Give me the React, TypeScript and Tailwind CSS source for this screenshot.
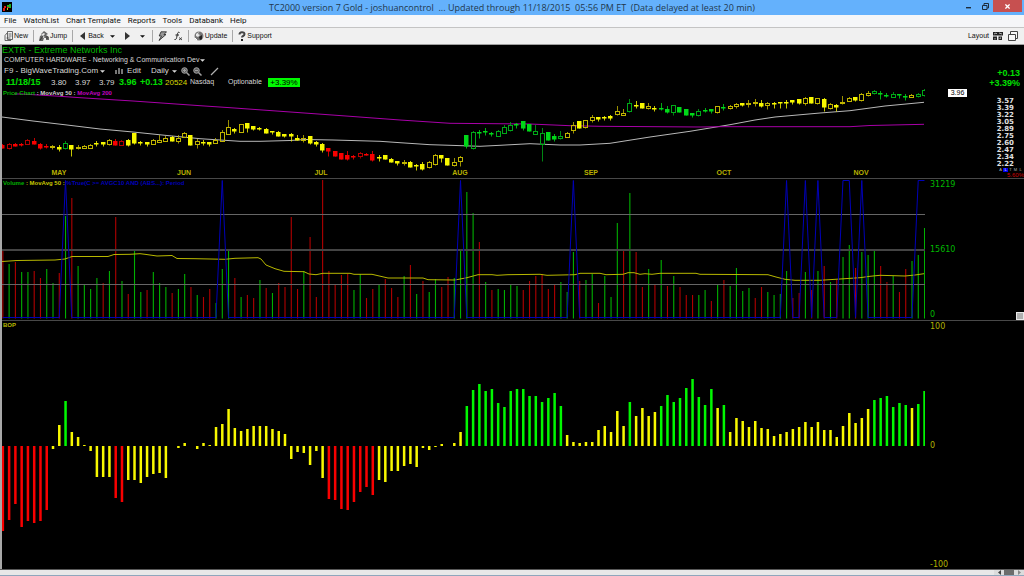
import React from 'react';

type Tone = 'r' | 'g' | 'y';
// tone, filled body, high, body top, body bottom, low
type Candle = [Tone, number, number, number, number, number];

const TONES: Record<Tone, string> = { r: '#f80000', g: '#00d818', y: '#f8f800' };
const HOLLOW: Record<Tone, string> = { r: '#b80000', g: '#00a818', y: '#c0b400' };

const WIDTH = 923;
const STEP = 6.27;
const barX = (i: number) => 0.8 + STEP * i;

const CANDLES: Candle[] = [
  ['r', 1, 56, 57, 60, 60], ['r', 0, 55, 56, 60, 61], ['r', 1, 55, 56, 58, 58], ['r', 1, 55, 56, 57, 58],
  ['r', 0, 51, 52, 56, 56], ['r', 1, 50, 53, 56, 56], ['r', 1, 55, 56, 60, 61], ['r', 1, 56, 58, 59, 60],
  ['y', 0, 57, 58, 59, 61], ['y', 1, 57, 59, 61, 63], ['g', 0, 53, 55, 60, 61], ['y', 1, 57, 57, 61, 68],
  ['y', 0, 57, 59, 60, 61], ['y', 0, 57, 58, 60, 60], ['y', 0, 56, 57, 60, 60], ['y', 1, 53, 55, 56, 58],
  ['y', 1, 54, 54, 56, 58], ['y', 0, 51, 52, 56, 57], ['r', 1, 51, 53, 57, 57], ['r', 0, 52, 53, 57, 57],
  ['y', 1, 51, 52, 57, 58], ['y', 1, 45, 45, 55, 56], ['y', 1, 53, 54, 55, 57], ['y', 1, 54, 54, 56, 58],
  ['y', 0, 51, 52, 56, 56], ['y', 0, 47, 52, 54, 54], ['y', 0, 48, 50, 53, 53], ['y', 1, 48, 49, 53, 53],
  ['y', 0, 47, 50, 53, 55], ['y', 0, 44, 45, 49, 49], ['y', 1, 47, 47, 57, 57], ['y', 0, 51, 53, 56, 60],
  ['y', 1, 52, 54, 55, 57], ['y', 1, 54, 54, 56, 58], ['y', 0, 50, 52, 55, 55], ['y', 0, 42, 44, 53, 53],
  ['y', 0, 32, 39, 46, 46], ['y', 1, 40, 41, 43, 45], ['y', 0, 36, 36, 44, 44], ['y', 1, 35, 35, 40, 44],
  ['y', 1, 38, 38, 41, 42], ['y', 1, 39, 40, 41, 42], ['y', 1, 40, 41, 45, 45], ['y', 1, 43, 43, 44, 46],
  ['y', 1, 43, 44, 48, 48], ['y', 1, 46, 46, 48, 49], ['y', 1, 45, 46, 48, 53], ['y', 1, 47, 50, 52, 52],
  ['y', 0, 47, 50, 52, 54], ['y', 1, 48, 48, 55, 56], ['y', 1, 53, 54, 56, 58], ['y', 1, 55, 56, 62, 64],
  ['r', 1, 60, 60, 63, 68], ['r', 1, 63, 63, 68, 68], ['r', 1, 65, 65, 71, 71], ['r', 1, 63, 67, 71, 72],
  ['r', 1, 67, 68, 69, 71], ['r', 0, 64, 65, 68, 70], ['r', 1, 65, 66, 67, 67], ['r', 1, 63, 66, 72, 73],
  ['y', 1, 67, 69, 70, 73], ['y', 1, 67, 67, 71, 71], ['y', 1, 70, 71, 74, 74], ['y', 1, 73, 73, 75, 77],
  ['y', 0, 72, 74, 75, 77], ['y', 1, 73, 74, 79, 79], ['y', 1, 76, 77, 78, 82], ['y', 1, 74, 76, 81, 82],
  ['y', 0, 73, 74, 79, 80], ['y', 0, 66, 67, 76, 77], ['y', 1, 67, 67, 70, 74], ['y', 1, 70, 70, 77, 77],
  ['y', 0, 70, 74, 77, 78], ['y', 0, 68, 69, 73, 78], ['g', 1, 47, 47, 58, 60], ['g', 0, 43, 44, 60, 61],
  ['g', 1, 42, 44, 45, 50], ['g', 1, 40, 43, 44, 47], ['g', 1, 44, 45, 46, 48], ['g', 0, 42, 43, 48, 48],
  ['g', 0, 37, 39, 45, 45], ['g', 0, 34, 37, 42, 43], ['g', 1, 35, 36, 37, 40], ['g', 1, 33, 33, 40, 42],
  ['g', 1, 36, 36, 43, 43], ['g', 0, 37, 43, 46, 46], ['g', 0, 40, 45, 56, 73], ['g', 1, 44, 44, 52, 52],
  ['g', 1, 46, 48, 51, 53], ['g', 0, 43, 48, 50, 51], ['y', 0, 44, 45, 49, 49], ['y', 0, 34, 37, 42, 45],
  ['y', 1, 33, 33, 40, 40], ['y', 0, 32, 32, 39, 40], ['y', 0, 27, 29, 32, 34], ['y', 1, 29, 29, 31, 33],
  ['y', 1, 28, 29, 30, 32], ['y', 1, 27, 28, 30, 32], ['y', 0, 18, 23, 26, 27], ['y', 0, 21, 25, 27, 27],
  ['g', 0, 11, 15, 23, 24], ['y', 1, 13, 17, 18, 20], ['y', 1, 15, 15, 20, 20], ['y', 0, 15, 18, 20, 21],
  ['y', 1, 18, 20, 21, 23], ['g', 1, 15, 20, 21, 22], ['g', 1, 18, 21, 24, 25], ['g', 0, 17, 17, 24, 27],
  ['g', 1, 19, 19, 24, 24], ['g', 1, 21, 21, 27, 27], ['g', 1, 25, 25, 27, 29], ['g', 0, 21, 23, 27, 28],
  ['g', 1, 20, 22, 23, 24], ['g', 1, 21, 21, 23, 25], ['y', 0, 18, 18, 24, 25], ['g', 1, 16, 19, 20, 22],
  ['y', 0, 17, 18, 20, 21], ['y', 0, 15, 16, 18, 20], ['y', 1, 15, 15, 17, 18], ['y', 0, 12, 15, 16, 19],
  ['y', 0, 11, 14, 15, 18], ['y', 1, 12, 15, 18, 19], ['y', 0, 14, 15, 17, 21], ['y', 1, 14, 15, 16, 20],
  ['y', 1, 14, 14, 15, 20], ['y', 1, 12, 14, 15, 20], ['y', 1, 12, 12, 14, 16], ['y', 1, 11, 11, 15, 16],
  ['y', 0, 9, 10, 15, 17], ['y', 1, 9, 9, 15, 15], ['y', 0, 10, 10, 15, 16], ['y', 1, 10, 11, 19, 23],
  ['y', 0, 15, 16, 20, 21], ['y', 1, 16, 17, 19, 23], ['y', 0, 8, 14, 15, 16], ['y', 0, 9, 10, 13, 13],
  ['y', 1, 9, 9, 12, 13], ['y', 0, 5, 6, 12, 13], ['y', 0, 3, 5, 7, 8], ['g', 0, 2, 3, 5, 6],
  ['g', 1, 3, 5, 6, 11], ['g', 1, 5, 7, 8, 9], ['g', 0, 4, 6, 9, 9], ['g', 1, 6, 6, 7, 10],
  ['g', 1, 6, 8, 9, 12], ['y', 0, 6, 7, 9, 9], ['g', 0, 5, 6, 8, 9], ['g', 0, 1, 2, 7, 8],
];

const AVG_50 = '0,29 31,33 65,37 98,41 131,44 165,47.5 198,50.7 238,53.3 258,53.3 288,52.5 303,51.5 331,52 378,53.3 398,54.7 428,56.7 448,57.3 478,58.3 498,57.3 528,55.7 558,57 578,57 608,55.3 648,49 688,43.3 728,36.7 753,32 773,29 818,25 848,22.7 883,18 922,14.3';
const AVG_200 = '12,6 20,6 58,8.3 78,9.7 131,13 198,17.7 228,19.7 298,24.7 348,28.3 398,32 448,35.3 528,36 568,37.7 598,38.3 698,39 718,38.7 848,38.7 868,37.5 922,36.3';

// Colour and top edge of each volume bar
const VOLUME = (
  'r71 g85 r83 g93 g93 r92 r99 g90 g104 r94 g37 r19 g87 g106 g110 g99 r104 g92 r38 g102 ' +
  'r115 g71 g113 r111 g93 g104 g108 r114 g110 g95 r108 g116 r118 r110 g124 g90 g72 r99 g118 r116 ' +
  'r119 g101 r109 g114 r104 r108 r38 r110 g92 r58 r118 r1 r92 r106 r96 r95 g111 g95 r119 r110 ' +
  'g106 r100 r109 r118 g97 r86 g115 r102 g113 g100 r108 r98 g99 g71 g13 g34 r63 g103 r111 g110 ' +
  'g111 g106 g107 r111 r102 r97 r95 r110 r106 g103 g113 g73 r102 g101 g95 r124 g97 g118 g44 r72 ' +
  'g14 r73 r108 g90 r106 g81 r107 g97 r108 r116 r116 g116 g111 r122 g105 r101 g107 g89 g112 g109 ' +
  'r119 r108 g113 g116 g115 g92 r119 r114 g93 r111 g92 r87 g103 r101 g78 g66 r89 g73 g76 g72 ' +
  'r87 r103 g97 r113 r90 g82 g76 g49'
).split(' ');

const VOLUME_AVG = '0,82.5 15,81.5 53,81 63,80 70,77.5 106,77.5 112,75.5 128,75.3 138,74.7 143,75.3 155,77 170,76.5 175,79.5 193,79.7 223,80.3 233,79.3 256,78.7 259,80 264,86 273,89.7 282,92.3 302,92.7 307,95 314,95.7 321,94.3 348,94.3 352,95.3 370,95.3 386,99 421,99 426,100.7 453,101 465,98.7 476,95.7 490,95.7 495,96.3 506,95.7 538,95.3 545,96.3 573,95.7 578,94.3 598,94.3 604,95.7 621,95.3 626,93.7 632,93.7 638,95.3 643,94.7 650,95.3 658,94.3 694,94.3 698,95.3 766,95.7 774,98 783,100.3 793,101.3 818,101.3 838,100 858,98.7 868,97.3 878,96.3 903,97 913,96 922,94.7';

// Sessions where the scan condition is true
const SIGNALS = [10, 35, 73, 91, 125, 128, 130, 134, 135, 137, 146, 147];

const BOP = (
  'r-85 r-74 r-58 r-81 r-75 r-77 r-75 r-64 y-3 y21 g45 y14 y9 y1 y-5 y-31 y-31 y-31 r-52 r-56 ' +
  'y-34 y-34 y-37 y-31 y-28 y-27 y-32 y0 y-2 y3 y0 y-3 y3 y1 y19 y22 y37 y18 y15 y17 ' +
  'y20 y20 y20 y17 y15 y12 y-13 y-6 y-7 y-19 y-5 y-32 r-53 r-54 r-63 r-64 r-56 r-46 r-41 r-49 ' +
  'y-34 y-36 y-25 y-25 y-20 y-18 y-21 y-2 y-4 y-1 y2 y0 y3 y14 g40 g56 g62 g55 g57 g43 ' +
  'g39 g55 g57 g57 g50 g50 g44 g48 g53 g40 y11 y4 y3 y4 y4 y16 y20 y14 y35 y20 ' +
  'g44 y30 y38 y30 y34 g40 g51 g44 g48 g58 g67 g49 g41 g57 y38 g41 y14 y28 y25 y19 ' +
  'y25 y18 y17 y10 y12 y14 y17 y19 y24 y19 y24 y16 y16 y9 y20 y33 y23 y28 y37 g46 ' +
  'g48 g50 g39 g43 g41 y38 g42 g55'
).split(' ');

const MONTHS = [
  { name: 'MAY', x: 57 }, { name: 'JUN', x: 182 }, { name: 'JUL', x: 319 }, { name: 'AUG', x: 458 },
  { name: 'SEP', x: 589 }, { name: 'OCT', x: 722 }, { name: 'NOV', x: 859 },
];

const PRICES = ['3.57', '3.39', '3.22', '3.05', '2.89', '2.75', '2.60', '2.47', '2.34', '2.22'];
const MENUS = ['File', 'WatchList', 'Chart Template', 'Reports', 'Tools', 'Databank', 'Help'];

function Caret() {
  return (
    <svg viewBox="0 0 6 3" className="w-[5px] h-[3px] shrink-0" fill="currentColor">
      <path d="M0 0h6L3 3z" />
    </svg>
  );
}

function Separator() {
  return <span className="w-px h-3 bg-[#a8a8a8]" />;
}

function TitleBar() {
  return (
    <header className="relative h-[15px] bg-[#64b1fc] flex items-center justify-center text-[#22384c]">
      <svg viewBox="0 0 10 10" className="absolute left-0.5 top-0.5 w-[10px] h-[10px]">
        <rect width="10" height="10" fill="#000" />
        <path d="M1 9V6h1V4h2v2H3v3zM5 4h2v2H5z" fill="#e01818" />
        <path d="M5 3h2V2h2v4H7V5H5z" fill="#20b020" />
        <path d="M4 8h1V6h1v2z" fill="#c8c820" />
      </svg>
      <h1 className="font-['Open_Sans',sans-serif] text-[9px] leading-[15px] whitespace-pre">
        TC2000 version 7 Gold - joshuancontrol  ... Updated through 11/18/2015  05:56 PM ET  (Data delayed at least 20 min)
      </h1>
      <div className="absolute right-0.5 top-0 h-3 flex items-center text-[#1c2c3c]">
        <button type="button" aria-label="Minimize" className="w-4 h-3 flex items-center justify-center">
          <svg viewBox="0 0 6 6" className="w-1.5 h-1.5"><path d="M0 4h5v1.4H0z" fill="currentColor" /></svg>
        </button>
        <button type="button" aria-label="Restore" className="w-4 h-3 flex items-center justify-center">
          <svg viewBox="0 0 7 7" className="w-[7px] h-[7px]" fill="none" stroke="currentColor">
            <path d="M2 2V.5h4.5V5H5" />
            <path d="M.5 2.5H5v4H.5z" />
          </svg>
        </button>
        <button type="button" aria-label="Close" className="w-[29px] h-3 bg-[#c75050] text-white flex items-center justify-center">
          <svg viewBox="0 0 6 6" className="w-[5px] h-[5px]"><path d="M.5.5l5 5m0-5l-5 5" stroke="currentColor" strokeWidth="1.5" /></svg>
        </button>
      </div>
    </header>
  );
}

function Toolbar() {
  return (
    <div className="h-[18px] bg-[#f0f0f0] border-t border-t-[#c4c4c4] border-b border-b-[#a0a0a0] pl-1 pr-1.5 flex items-center gap-[5px] text-[7px] leading-[10px] text-[#101010]">
      <button type="button" className="flex items-center gap-px">
        <svg viewBox="0 0 9 10" className="w-[9px] h-[10px]" fill="none" stroke="#444" strokeWidth="0.8">
          <path d="M3.5.5h5v8h-5zM1 4.5v5h6M1 4.5L3 2M4.5 3h3M4.5 5h3M2.5 7h4" />
        </svg>
        New
      </button>
      <Separator />
      <button type="button" className="flex items-center">
        <svg viewBox="0 0 11 10" className="w-[11px] h-[10px]">
          <path d="M2 3l3-3 4 3-2 1 3 2v3H7V7H5l-1 3H0l1-5 2-1z" fill="#666" />
          <path d="M3 3l2-1 1 1-2 2 2 1-2 1z" fill="#eee" />
          <path d="M1 9l3-4M8 8V5" stroke="#222" strokeWidth="0.7" />
        </svg>
        Jump
      </button>
      <Separator />
      <button type="button" className="flex items-center gap-[3px] pl-0.5">
        <svg viewBox="0 0 5 8" className="w-[5px] h-2"><path d="M5 0v8L0 4z" fill="#333" /></svg>
        Back
      </button>
      <button type="button" aria-label="Back history" className="w-2 h-3 flex items-center justify-center"><Caret /></button>
      <button type="button" aria-label="Forward" className="w-3 h-3 flex items-center justify-center">
        <svg viewBox="0 0 5 8" className="w-[5px] h-2"><path d="M0 0v8l5-4z" fill="#333" /></svg>
      </button>
      <button type="button" aria-label="Forward history" className="w-2 h-3 flex items-center justify-center"><Caret /></button>
      <Separator />
      <button type="button" aria-label="Easy scan">
        <svg viewBox="0 0 9 10" className="w-[9px] h-[10px]" fill="#999" stroke="#222" strokeWidth="0.8">
          <path d="M3 .8h5.5L6 3.5h2L1 9.5l2.500-4.500H1.200z" />
        </svg>
      </button>
      <button type="button" aria-label="Formula" className="pl-0.5">
        <svg viewBox="0 0 9 10" className="w-[9px] h-[10px]" fill="none" stroke="#222">
          <path d="M5.500 1.500C3.500.5 3.500 3 3 5S2.500 9 .5 8.500M1.500 4h3.500" />
          <path d="M5 6.500l3 2.500M8 6.500L5 9" strokeWidth="0.8" />
        </svg>
      </button>
      <Separator />
      <button type="button" className="flex items-center gap-px">
        <svg viewBox="0 0 10 10" className="w-[10px] h-[10px]">
          <circle cx="5" cy="5" r="4.500" fill="#777" />
          <path d="M2 3l3-2-1 2 2 1-2 2-2-1z" fill="#e8e8e8" />
          <path d="M5 6l3-2v4l-2 1z" fill="#222" />
          <path d="M1 7l2 2" stroke="#fff" />
        </svg>
        Update
      </button>
      <Separator />
      <button type="button" className="flex items-center gap-px">
        <svg viewBox="0 0 8 10" className="w-2 h-[10px]" fill="none">
          <path d="M1.500 3.500C1.500.5 6.500.5 6.500 3S4 4.500 4 6.500" stroke="#444" strokeWidth="2" />
          <path d="M3 8h2v2H3z" fill="#222" />
        </svg>
        Support
      </button>
      <button type="button" className="ml-auto flex items-center gap-1">
        Layout
        <svg viewBox="0 0 10 10" className="w-[10px] h-[10px]" fill="#222">
          <path d="M0 1h10v3.500H0zM0 5.500h4v3.500H0zM5.500 5.500H9v3.500H5.500z" />
          <path d="M1 3l2-1 1 1M6 2l3 1M2 8.500V7M7 8V7h1" stroke="#eee" strokeWidth="0.7" fill="none" />
        </svg>
      </button>
      <button type="button" aria-label="Windows">
        <svg viewBox="0 0 10 10" className="w-[10px] h-[10px]" fill="#f8f8f8" stroke="#444">
          <path d="M2.500.5h7v7h-7z" />
          <path d="M.5 3.500h7v6h-7z" />
        </svg>
      </button>
    </div>
  );
}

function Magnifier({ minus }: { minus?: boolean }) {
  return (
    <svg viewBox="0 0 9 9" className="w-[9px] h-[9px]" fill="none" stroke="#a0a0a0">
      <circle cx="3.500" cy="3.500" r="2.800" fill="#606060" />
      <path d="M5.500 5.500L8.500 8.500" strokeWidth="1.500" />
      <path d={minus ? 'M2 3.500h3' : 'M2 3.500h3M3.500 2v3'} />
    </svg>
  );
}

function SymbolHeader() {
  return (
    <section className="flex justify-between items-end h-[43px] pr-1">
      <div className="text-[#d8d8d8] whitespace-nowrap">
        <h2 className="text-[9px] leading-[11px] text-[#00b800]">EXTR - Extreme Networks Inc</h2>
        <button type="button" className="flex items-center gap-px pl-0.5 h-[9px] text-[7px]">
          COMPUTER HARDWARE - Networking &amp; Communication Dev
          <Caret />
        </button>
        <div className="flex items-center pl-0.5 h-3 text-[8px]">
          <button type="button" className="flex items-center gap-0.5">F9 - BigWaveTrading.Com <Caret /></button>
          <button type="button" className="flex items-center gap-[3px] ml-2.5">
            <svg viewBox="0 0 9 8" className="w-[9px] h-2" fill="#777"><path d="M0 3h2v4H0zM3 1h2v6H3zM6 2h2v5H6z" /></svg>
            Edit
          </button>
          <button type="button" className="flex items-center gap-[3px] ml-2.5">Daily <Caret /></button>
          <button type="button" aria-label="Zoom in" className="ml-1"><Magnifier /></button>
          <button type="button" aria-label="Zoom out" className="ml-[3px]"><Magnifier minus /></button>
          <button type="button" aria-label="Draw line" className="ml-2">
            <svg viewBox="0 0 9 9" className="w-[9px] h-[9px]"><path d="M1 8L8 1" stroke="#b0b0b0" strokeWidth="1.300" /></svg>
          </button>
        </div>
        <div className="flex items-center pl-1 h-[11px] text-[8px]">
          <b className="w-[45px] text-[9px] text-[#00e000]">11/18/15</b>
          <span className="w-6">3.80</span>
          <span className="w-6">3.97</span>
          <span className="w-5">3.79</span>
          <b className="w-[21px] text-[9px] text-[#00e000]">3.96</b>
          <b className="w-[25px] text-[9px] text-[#00e000]">+0.13</b>
          <span className="w-[25px] text-[#d8d800]">20524</span>
          <span className="w-[38px] text-[7px]">Nasdaq</span>
          <span className="w-10 text-[7px]">Optionable</span>
          <span className="w-8 h-[9px] leading-[9px] text-center bg-[#00f800] text-black">+3.39%</span>
        </div>
      </div>
      <div className="text-right font-bold text-[9px] leading-[10px] text-[#00e000]">
        <p>+0.13</p>
        <p>+3.39%</p>
      </div>
    </section>
  );
}

function PricePanel() {
  return (
    <section className="flex h-[90px]">
      <div className="relative flex flex-1 min-w-0">
        <svg viewBox={`0 0 ${WIDTH} 90`} preserveAspectRatio="none" className="w-full h-full">
          <polyline points={AVG_50} fill="none" stroke="#b8b8b8" />
          <polyline points={AVG_200} fill="none" stroke="#a800a8" />
          {CANDLES.map(([tone, filled, high, top, bottom, low], i) => {
            const x = Math.floor(barX(i));
            const color = filled ? TONES[tone] : HOLLOW[tone];
            return (
              <g key={i} fill={color}>
                <rect x={x} y={high} width={1} height={top - high} opacity={0.8} />
                <rect x={x} y={bottom} width={1} height={low - bottom + 0.5} opacity={0.8} />
                {filled
                  ? <rect x={x - 2} y={top} width={4.5} height={Math.max(bottom - top, 1) + 0.5} />
                  : <rect x={x - 1.5} y={top + 0.5} width={4} height={Math.max(bottom - top, 1)} fill="none" stroke={color} />}
              </g>
            );
          })}
        </svg>
        <p className="absolute left-px top-0.5 text-[6px] leading-[7px] font-bold text-[#d0d0d0] whitespace-nowrap">
          <span className="text-[#00b000]">Price Chart</span> : MovAvg 50 : <span className="text-[#c000c0]">MovAvg 200</span>
        </p>
        {MONTHS.map(m => (
          <span
            key={m.name}
            className="absolute bottom-px -translate-x-1/2 text-[7px] leading-[8px] font-bold text-[#b8b000]"
            style={{ left: `${(m.x / WIDTH) * 100}%` }}
          >
            {m.name}
          </span>
        ))}
      </div>
      <div className="w-[99px] shrink-0 flex justify-between items-start">
        <span className="ml-[23px] mt-px w-[19px] h-2 leading-[8px] text-[7px] text-center bg-white text-black">3.96</span>
        <div className="flex flex-col items-end pt-[10px]">
          <ul className="pr-2.5 font-['DejaVu_Sans',sans-serif] font-bold text-[7px] leading-[7px] text-[#e0e0e0]">
            {PRICES.map(p => <li key={p}>{p}</li>)}
          </ul>
          <div className="flex pr-px text-[4px] leading-[4px] text-[#b0b0b0]">
            {['A', 'L', 'T', 'M', 'L'].map((scale, i) => (
              <button key={i} type="button" className={i === 1 ? 'w-[5px] h-1 bg-[#0000f0] text-white' : 'w-[5px] h-1'}>{scale}</button>
            ))}
          </div>
          <span className="text-[6px] leading-[6px] text-[#d00000]">5.60%</span>
        </div>
      </div>
    </section>
  );
}

function VolumePanel() {
  const signal = VOLUME.map((_, i) => `${barX(i)},${SIGNALS.includes(i) ? 1.5 : 138.5}`).join(' ');
  return (
    <section className="relative flex h-[142px] border-t border-[#484848]">
      <div className="relative flex flex-1 min-w-0">
        <svg viewBox={`0 0 ${WIDTH} 141`} preserveAspectRatio="none" className="w-full h-full">
          {VOLUME.map((bar, i) => {
            const top = Number(bar.slice(1));
            return <rect key={i} x={barX(i) - 0.5} y={top} width={1.1} height={139.5 - top} fill={bar[0] === 'r' ? '#b00000' : '#00b000'} />;
          })}
          <path d={`M0 35.5H${WIDTH}M0 105.5H${WIDTH}`} stroke="#666" />
          <path d={`M0 71H${WIDTH}`} stroke="#444" strokeWidth="2" />
          <polyline points={VOLUME_AVG} fill="none" stroke="#b8b800" />
          <polyline points={signal} fill="none" stroke="#0000b8" />
        </svg>
        <p className="absolute left-px top-px text-[6px] leading-[7px] font-bold text-[#c8c800] whitespace-nowrap">
          <span className="text-[#00b000]">Volume</span> : MovAvg 50 : <span className="text-[#0000b8]">%True(C &gt;= AVGC10 AND (ABS...): Period</span>
        </p>
      </div>
      <div className="w-[99px] shrink-0 pl-[5px] flex flex-col justify-between text-[8px] leading-[11px] text-[#00b800] font-['DejaVu_Sans',sans-serif]">
        <span>31219</span>
        <span>15610</span>
        <span>0</span>
      </div>
      <button type="button" aria-label="Resize panel" className="absolute right-0 bottom-0 w-2 h-2 bg-[#b0b0b0] border border-[#e8e8e8]" />
    </section>
  );
}

function BopPanel() {
  return (
    <section className="flex flex-1 border-t border-[#484848]">
      <div className="relative flex flex-1 min-w-0">
        <svg viewBox={`0 0 ${WIDTH} 248`} preserveAspectRatio="none" className="w-full">
          {BOP.map((bar, i) => {
            const value = Number(bar.slice(1));
            const color = bar[0] === 'r' ? '#f80000' : bar[0] === 'g' ? '#00f800' : '#f8f800';
            return <rect key={i} x={barX(i) - 1.2} y={value > 0 ? 125 - value : 125} width={2.5} height={Math.abs(value)} fill={color} />;
          })}
        </svg>
        <p className="absolute left-px top-px text-[6px] leading-[7px] font-bold text-[#b8b800]">BOP</p>
      </div>
      <div className="w-[99px] shrink-0 pl-[5px] pt-px flex flex-col justify-between text-[8px] leading-[9px] text-[#b0b000] font-['DejaVu_Sans',sans-serif]">
        <span>100</span>
        <span>0</span>
        <span>-100</span>
      </div>
    </section>
  );
}

export default function App() {
  return (
    <div className="min-h-screen flex flex-col bg-black font-['Liberation_Sans',Arial,sans-serif]">
      <TitleBar />
      <nav className="h-3 bg-[#f5f6f8] pl-1 flex items-center gap-[7px] font-['Roboto',sans-serif] text-[8px] leading-[12px] text-[#101010]">
        {MENUS.map(menu => <button key={menu} type="button">{menu}</button>)}
      </nav>
      <Toolbar />
      <main className="flex-1 flex flex-col border-l-2 border-[#a8a8a8]">
        <SymbolHeader />
        <PricePanel />
        <VolumePanel />
        <BopPanel />
      </main>
      <footer className="h-[7px] bg-[#e8e8e8] border-t border-t-[#585858] border-b border-b-[#8fa6bc] flex justify-end items-stretch">
        <button type="button" aria-label="Scroll left" className="w-[10px] flex items-center justify-center bg-[#dcdcdc]">
          <svg viewBox="0 0 3 5" className="w-[3px] h-[5px]"><path d="M3 0v5L0 2.500z" fill="#444" /></svg>
        </button>
        <span className="w-[10px] bg-[#6c6c6c]" />
        <button type="button" aria-label="Scroll right" className="w-[10px] flex items-center justify-center bg-[#dcdcdc]">
          <svg viewBox="0 0 3 5" className="w-[3px] h-[5px]"><path d="M0 0v5l3-2.500z" fill="#888" /></svg>
        </button>
      </footer>
    </div>
  );
}
